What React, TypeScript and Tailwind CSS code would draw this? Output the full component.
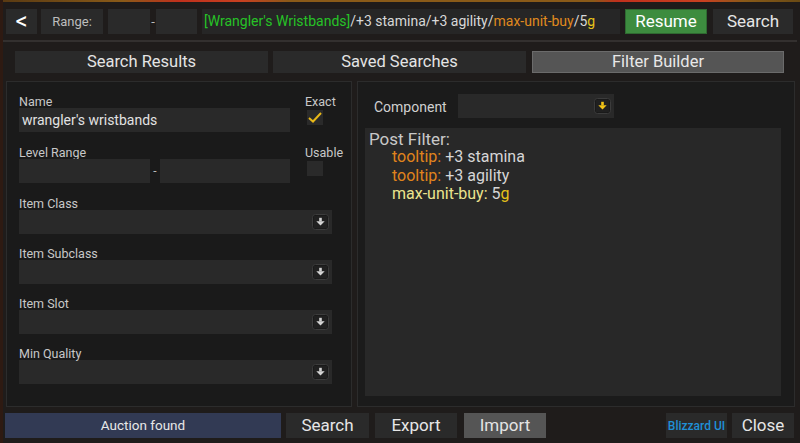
import React from "react";

const Arrow = ({ yellow = false }: { yellow?: boolean }) => (
  <svg width="17" height="16" viewBox="0 0 17 16" className="shrink-0">
    <rect x="0.5" y="0.5" width="16" height="15" rx="3" fill="#141414" stroke="#3c3c3c" />
    <rect x="1.5" y="1.5" width="14" height="13" rx="2" fill="#202020" />
    <rect x="7.2" y="3.8" width="2.6" height="3.6" fill={yellow ? "#f2c417" : "#d4d4d4"} />
    <polygon points="4.3,7.2 12.7,7.2 8.5,11.4" fill={yellow ? "#f2c417" : "#d4d4d4"} />
  </svg>
);

const Btn = ({ children, className = "" }: { children: React.ReactNode; className?: string }) => (
  <div className={`flex items-center justify-center bg-[#2a2a2a] whitespace-nowrap ${className}`}>{children}</div>
);

const Label = ({ children, className = "" }: { children: React.ReactNode; className?: string }) => (
  <div className={`text-[12.5px] leading-[13px] h-[13px] text-[#c8c8c8] ${className}`}>{children}</div>
);

const Dropdown = ({ label, mt }: { label: string; mt: string }) => (
  <div className={mt}>
    <Label>{label}</Label>
    <div className="w-[313px] h-[24px] bg-[#292929] flex items-center justify-end pr-[3px]">
      <Arrow />
    </div>
  </div>
);

export default function App() {
  return (
    <div className="w-[800px] h-[443px] bg-[#1f1c1b] flex flex-col overflow-hidden font-['Roboto',sans-serif] border-l-[3px] border-[#2e1a12]">
      <div className="h-[9px] flex flex-col">
        <div className="h-[2px] bg-[linear-gradient(90deg,#5a3a12_0%,#8a5a18_15%,#c0301c_22%,#c84020_30%,#8a5a18_36%,#8a5a18_74%,#c0301c_77%,#c84020_88%,#8a5a18_93%,#6a4a14_100%)]" />
        <div className="flex-1 bg-[#1f1b1a]" />
      </div>
      {/* top bar */}
      <div className="flex h-[25px] pl-[3px]">
        <Btn className="w-[31px] text-[24px] leading-none pb-[2px] text-white">&lt;</Btn>
        <Btn className="w-[62px] ml-[4px] text-[13px] text-[#bdbdbd]">Range:</Btn>
        <div className="w-[42px] ml-[5px] bg-[#2a2a2a]" />
        <div className="w-[6px] flex items-center justify-center text-[#bbb] text-[13px]">-</div>
        <div className="w-[41px] bg-[#2a2a2a]" />
        <div className="w-[418px] ml-[5px] bg-[#262626] flex items-center pl-[2px] text-[14px] text-[#d8d8d8] whitespace-nowrap">
          <span className="text-[#27c227]">[Wrangler's Wristbands]</span>
          <span>/+3 stamina/+3 agility/</span>
          <span className="text-[#e08a1e]">max-unit-buy</span>
          <span>/5</span>
          <span className="text-[#e6c21a]">g</span>
        </div>
        <div className="w-[82px] ml-[5px] bg-[#3d8c3f] border border-[#2f6a31] flex items-center justify-center text-[17px] text-white">
          Resume
        </div>
        <Btn className="w-[80px] ml-[6px] text-[17px] text-[#e6e6e6]">Search</Btn>
      </div>
      {/* separator */}
      <div className="mt-[6px] h-[2px] bg-[#33302f] mr-[3px]" />
      {/* tabs */}
      <div className="flex h-[22px] mt-[9px] pl-[12px] gap-[5px]">
        <Btn className="w-[253px] text-[16.5px] text-[#e4e4e4]">Search Results</Btn>
        <Btn className="w-[253px] text-[16.5px] text-[#e4e4e4]">Saved Searches</Btn>
        <div className="w-[252px] ml-[1px] flex items-center justify-center bg-[#555555] border border-[#6b6b6b] text-[#e8e8e8] text-[16.5px]">
          Filter Builder
        </div>
      </div>
      {/* main */}
      <div className="flex h-[326px] mt-[8px] pl-[3px] gap-[5px]">
        {/* left panel */}
        <div className="w-[346px] bg-[#1a1a1a] border border-[#2c2c2c] pl-[12px] pt-[13px]">
          <div className="flex">
            <div>
              <Label>Name</Label>
              <div className="w-[271px] h-[24px] bg-[#292929] flex items-center pl-[3px] text-[14px] text-[#e2e2e2]">
                wrangler's wristbands
              </div>
            </div>
            <div className="ml-[15px]">
              <Label>Exact</Label>
              <div className="ml-[2px] mt-[2px] w-[16px] h-[15px] bg-[#2a2a2a] flex items-center justify-center">
                <svg width="16" height="14" viewBox="0 0 16 14">
                  <polyline points="2,7 6,10.5 14,2" fill="none" stroke="#e8b818" strokeWidth="2" />
                </svg>
              </div>
            </div>
          </div>
          <div className="flex mt-[14px]">
            <div>
              <Label>Level Range</Label>
              <div className="flex h-[24px]">
                <div className="w-[131px] bg-[#292929]" />
                <div className="w-[10px] flex items-center justify-center text-[#bbb] text-[12px]">-</div>
                <div className="w-[130px] bg-[#292929]" />
              </div>
            </div>
            <div className="ml-[15px]">
              <Label>Usable</Label>
              <div className="ml-[2px] mt-[2px] w-[16px] h-[15px] bg-[#2a2a2a]" />
            </div>
          </div>
          <Dropdown label="Item Class" mt="mt-[14px]" />
          <Dropdown label="Item Subclass" mt="mt-[13px]" />
          <Dropdown label="Item Slot" mt="mt-[13px]" />
          <Dropdown label="Min Quality" mt="mt-[13px]" />
        </div>
        {/* right panel */}
        <div className="w-[438px] bg-[#1b1b1b] border border-[#2c2c2c] pt-[12px] pl-[7px] pr-[13px] pb-[10px] flex flex-col">
          <div className="flex items-center h-[24px]">
            <div className="ml-[9px] w-[84px] text-[14px] text-[#d0d0d0] pt-[2px]">Component</div>
            <div className="w-[156px] h-[24px] bg-[#292929] flex items-center justify-end pr-[3px]">
              <Arrow yellow />
            </div>
          </div>
          <div className="mt-[10px] flex-1 bg-[#282828] pl-[4px] pt-[2px] text-[16px] leading-[18.3px] text-[#d6d6d6]">
            <div className="text-[17px] text-[#c8c8c8]">Post Filter:</div>
            <div className="pl-[23px]">
              <div>
                <span className="text-[#e0841c]">tooltip:</span> +3 stamina
              </div>
              <div>
                <span className="text-[#e0841c]">tooltip:</span> +3 agility
              </div>
              <div>
                <span className="text-[#ece48e]">max-unit-buy:</span> 5<span className="text-[#e6c21a]">g</span>
              </div>
            </div>
          </div>
        </div>
      </div>
      {/* bottom */}
      <div className="flex h-[25px] mt-[6px] pl-[2px]">
        <div className="w-[276px] bg-[#323a54] flex items-center justify-center text-[13.5px] text-[#e8e8e8]">
          Auction found
        </div>
        <Btn className="w-[83px] ml-[5px] text-[17px] text-[#e6e6e6]">Search</Btn>
        <Btn className="w-[82px] ml-[6px] text-[17px] text-[#e6e6e6]">Export</Btn>
        <div className="w-[82px] ml-[7px] bg-[#555555] flex items-center justify-center text-[17px] text-[#e4e4e4]">
          Import
        </div>
        <div className="flex-1" />
        <Btn className="w-[61px] text-[12px] font-medium text-[#1f8fd6]">Blizzard UI</Btn>
        <Btn className="w-[62px] ml-[5px] mr-[6px] text-[17px] text-[#e6e6e6]">Close</Btn>
      </div>
    </div>
  );
}
